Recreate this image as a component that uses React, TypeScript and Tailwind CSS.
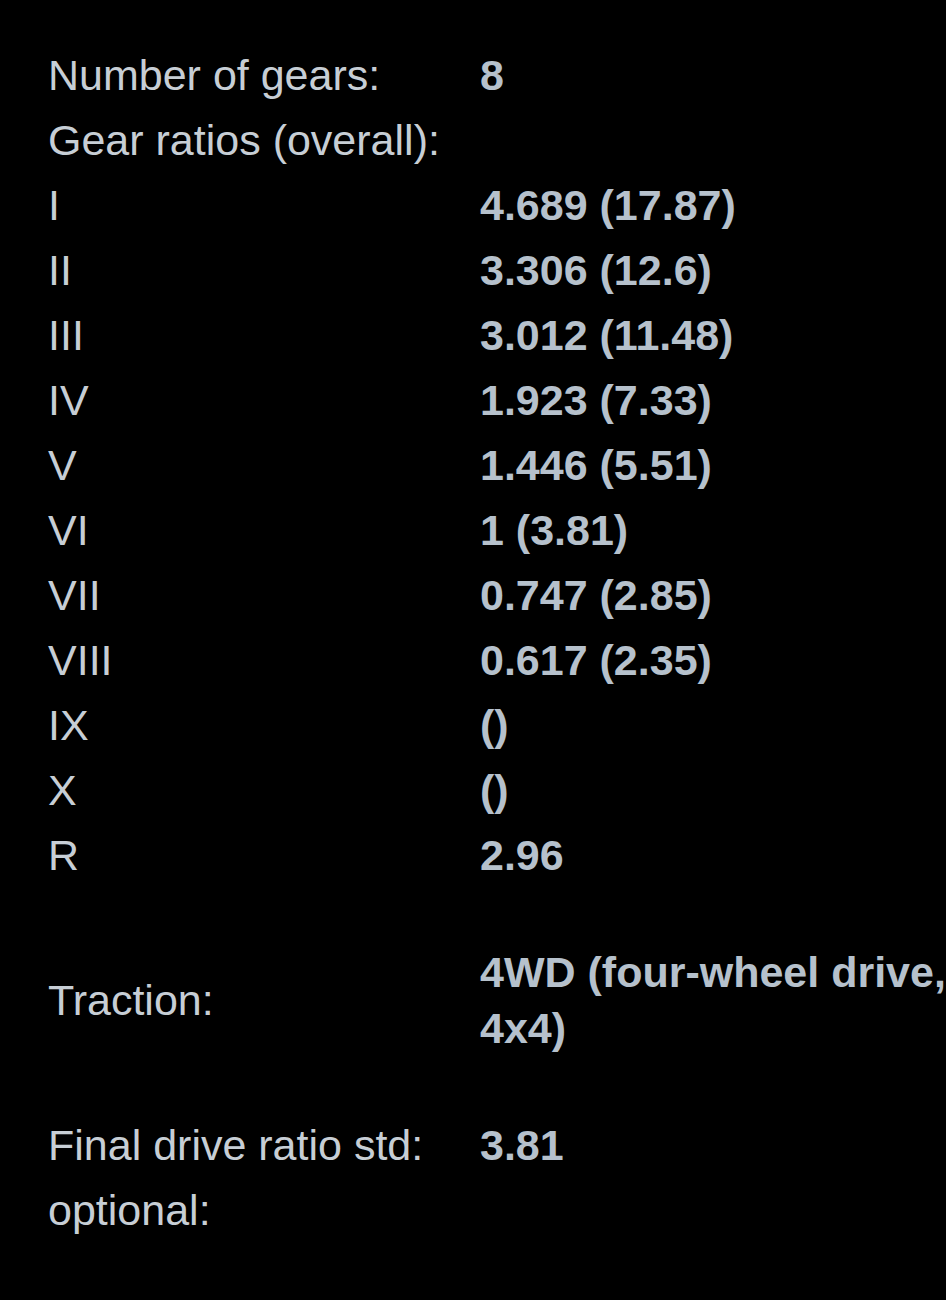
const gears = [
  ["I", "4.689 (17.87)"],
  ["II", "3.306 (12.6)"],
  ["III", "3.012 (11.48)"],
  ["IV", "1.923 (7.33)"],
  ["V", "1.446 (5.51)"],
  ["VI", "1 (3.81)"],
  ["VII", "0.747 (2.85)"],
  ["VIII", "0.617 (2.35)"],
  ["IX", "()"],
  ["X", "()"],
  ["R", "2.96"],
];

const Row = ({ label, value }: { label: string; value?: string }) => (
  <div className="flex h-[65px] items-center">
    <div className="w-[432px] shrink-0 text-[#c7ced5]">{label}</div>
    <div className="w-[500px] shrink-0 font-bold text-[#b6c1cc]">{value}</div>
  </div>
);

const App = () => {
  return (
    <div
      className="w-[946px] h-[1300px] overflow-hidden bg-black pl-12 pt-[42px] text-[43px] leading-[56px]"
      style={{ fontFamily: '"Liberation Sans", Arial, sans-serif' }}
    >
      <Row label="Number of gears:" value="8" />
      <Row label="Gear ratios (overall):" />
      {gears.map(([l, v]) => (
        <Row key={l} label={l} value={v} />
      ))}
      <div className="flex h-[225px] items-center">
        <div className="w-[432px] shrink-0 text-[#c7ced5]">Traction:</div>
        <div className="w-[500px] shrink-0 font-bold text-[#b6c1cc]">
          4WD (four-wheel drive, 4x4)
        </div>
      </div>
      <Row label="Final drive ratio std:" value="3.81" />
      <Row label="optional:" />
    </div>
  );
};

export default App;
